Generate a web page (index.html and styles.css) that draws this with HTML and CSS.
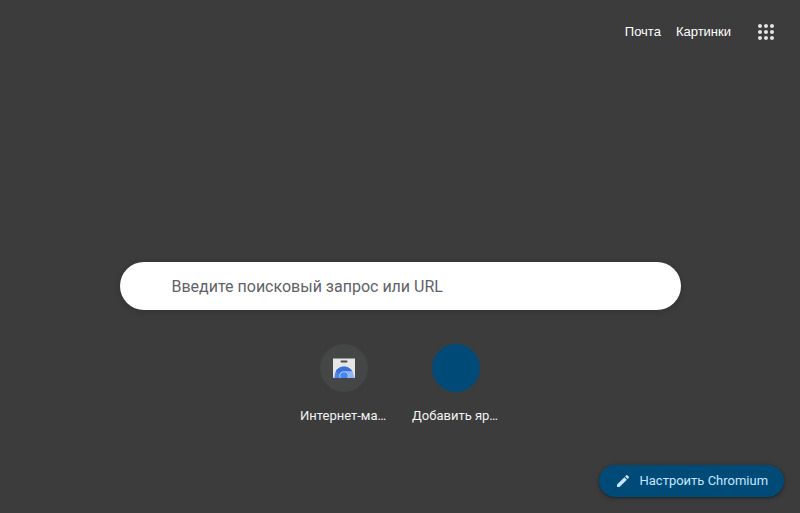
FILE: index.html
```
<!DOCTYPE html>
<html lang="ru">
<head>
<meta charset="utf-8">
<title>Новая вкладка</title>
<link rel="stylesheet" href="styles.css">
</head>
<body>
<header class="top">
  <a class="top-link">Почта</a>
  <a class="top-link">Картинки</a>
  <svg class="apps" viewBox="0 0 24 24" width="24" height="24"><path d="M6 8c1.1 0 2-.9 2-2s-.9-2-2-2-2 .9-2 2 .9 2 2 2zm6 12c1.1 0 2-.9 2-2s-.9-2-2-2-2 .9-2 2 .9 2 2 2zm-6 0c1.1 0 2-.9 2-2s-.9-2-2-2-2 .9-2 2 .9 2 2 2zm0-6c1.1 0 2-.9 2-2s-.9-2-2-2-2 .9-2 2 .9 2 2 2zm6 0c1.1 0 2-.9 2-2s-.9-2-2-2-2 .9-2 2 .9 2 2 2zm4-8c0 1.1.9 2 2 2s2-.9 2-2-.9-2-2-2-2 .9-2 2zm-4 2c1.1 0 2-.9 2-2s-.9-2-2-2-2 .9-2 2 .9 2 2 2zm6 6c1.1 0 2-.9 2-2s-.9-2-2-2-2 .9-2 2 .9 2 2 2zm0 6c1.1 0 2-.9 2-2s-.9-2-2-2-2 .9-2 2 .9 2 2 2z"/></svg>
</header>
<main class="content">
  <div class="search">Введите поисковый запрос или URL</div>
  <div class="tiles">
    <a class="tile">
      <span class="tile-icon">
        <svg viewBox="0 0 24 24" width="24" height="24">
          <clipPath id="bag"><path d="M1 2.500h22v18.500q0 1-1 1H2q-1 0-1-1z"/></clipPath>
          <g clip-path="url(#bag)">
            <path fill="#e6e6e6" d="M1 2h22v20H1z"/>
            <circle cx="12" cy="20" r="9.500" fill="#4b83e8"/>
            <path fill="#3a6fd6" d="M3.800 15.200a9.500 9.500 0 0 1 16.400 0H12a4.800 4.800 0 0 0-4.600 3.400z"/>
            <path fill="#8fb5f5" d="M12 15.200h8.200q1.300 2 1.300 4.800v3H14l2.800-3a4.800 4.800 0 0 0-4.800-4.800z"/>
            <circle cx="12" cy="20" r="4.800" fill="#a9c6f7"/>
            <circle cx="12" cy="20" r="3.700" fill="#4388f0"/>
          </g>
          <rect x="8.500" y="4.500" width="7" height="2" rx="1" fill="#484b4d"/>
        </svg>
      </span>
      <span class="tile-label">Интернет-ма…</span>
    </a>
    <a class="tile">
      <span class="tile-icon tile-icon-add"></span>
      <span class="tile-label">Добавить яр…</span>
    </a>
  </div>
</main>
<footer class="bottom">
  <button class="customize">
    <svg viewBox="0 0 24 24" width="16" height="16"><path d="M3 17.250V21h3.750L17.810 9.940l-3.750-3.750L3 17.250zM20.710 7.040c.39-.39.39-1.020 0-1.410l-2.340-2.340a.996.996 0 0 0-1.410 0l-1.830 1.830 3.750 3.750 1.830-1.830z"/></svg>
    <span>Настроить Chromium</span>
  </button>
</footer>
</body>
</html>
```
FILE: styles.css
```
* { box-sizing: border-box; }
body {
  margin: 0;
  height: 513px;
  display: flex;
  flex-direction: column;
  overflow: hidden;
  background: #3c3c3c;
  font-family: Roboto, "Liberation Sans", sans-serif;
}
.top {
  height: 64px;
  padding-right: 22px;
  display: flex;
  justify-content: flex-end;
  align-items: center;
  font: 13px/24px "Liberation Sans", Arial, sans-serif;
  color: #fff;
}
.top-link { margin-right: 15px; }
.apps { margin-left: 8px; fill: #e3e3e3; }
.content {
  flex: 1;
  display: flex;
  flex-direction: column;
  align-items: center;
  padding-top: 198px;
}
.search {
  width: 561px;
  height: 48px;
  margin-left: 1px;
  padding-left: 51.5px;
  border-radius: 24px;
  background: #fff;
  box-shadow: 0 1px 6px rgba(0, 0, 0, 0.2);
  font-size: 16px;
  line-height: 50px;
  color: #5f6368;
}
.tiles {
  display: flex;
  margin-top: 34px;
}
.tile {
  width: 112px;
  display: flex;
  flex-direction: column;
  align-items: center;
}
.tile-icon {
  width: 48px;
  height: 48px;
  border-radius: 50%;
  background: #444746;
  display: flex;
  align-items: center;
  justify-content: center;
}
.tile-icon-add { background: #004a77; }
.tile-label {
  width: 88px;
  margin-top: 14px;
  white-space: nowrap;
  font-size: 13px;
  line-height: 20px;
  color: #f1f3f4;
}
.bottom {
  display: flex;
  justify-content: flex-end;
  padding: 0 16px 16px;
}
.customize {
  width: 185px;
  height: 32px;
  display: flex;
  align-items: center;
  gap: 8.500px;
  padding: 0 0 0 16px;
  border: 0;
  border-radius: 16px;
  background: #004a77;
  box-shadow: 0 1px 2px rgba(0, 0, 0, 0.3), 0 1px 5px 1px rgba(0, 0, 0, 0.15);
  color: #c2e7ff;
  font: 13px/20px Roboto, sans-serif;
  white-space: nowrap;
}
.customize svg { fill: #c2e7ff; }
```
